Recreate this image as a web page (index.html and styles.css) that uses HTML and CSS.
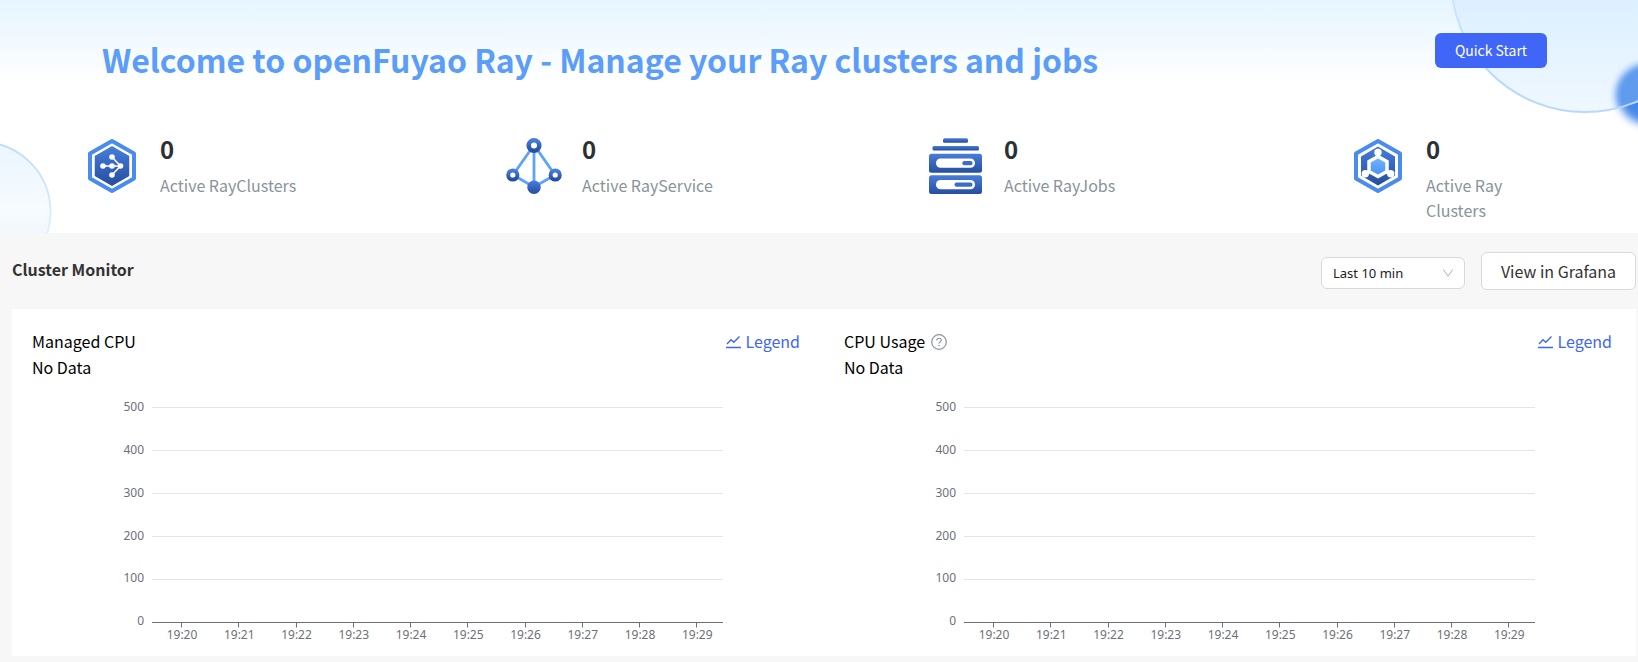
FILE: index.html
```html
<!DOCTYPE html>
<html lang="en">
<head>
    <meta charset="utf-8">
    <meta name="viewport" content="width=device-width, initial-scale=1.0">
    <title>openFuyao Ray</title>
    <link rel="stylesheet" href="styles.css">
</head>
<body>
    <header class="banner">
        <svg class="banner-bg" width="1638" height="233" viewBox="0 0 1638 233">
            <defs>
                <linearGradient id="bubbleLeft" x1="0" y1="0" x2="0" y2="1">
                    <stop offset="0" stop-color="#ebf6ff"/>
                    <stop offset="0.5" stop-color="#f6fbff"/>
                    <stop offset="0.68" stop-color="#f0f6fb"/>
                </linearGradient>
                <linearGradient id="bubbleLine" x1="0" y1="0" x2="0" y2="1">
                    <stop offset="0" stop-color="#b9dcff"/>
                    <stop offset="0.6" stop-color="#dceeff"/>
                </linearGradient>
                <linearGradient id="bubbleRight" x1="0" y1="0" x2="0" y2="1">
                    <stop offset="0.5" stop-color="#d9eeff"/>
                    <stop offset="1" stop-color="#eff8ff"/>
                </linearGradient>
                <linearGradient id="rightLine" x1="0" y1="0" x2="0" y2="1">
                    <stop offset="0.55" stop-color="#cfe6ff"/>
                    <stop offset="0.9" stop-color="#b5d9ff"/>
                </linearGradient>
                <clipPath id="insideRight"><circle cx="1585" cy="-22" r="134"/></clipPath>
            </defs>
            <circle cx="-19" cy="211.500" r="69.500" fill="url(#bubbleLeft)" stroke="url(#bubbleLine)" stroke-width="1.8"/>
            <circle cx="1585" cy="-22" r="134" fill="url(#bubbleRight)"/>
            <circle class="blob" cx="1647" cy="95" r="29" fill="#4488ea"/>
            <g clip-path="url(#insideRight)">
                <circle class="blob" cx="1647" cy="95" r="29" fill="#619bee"/>
            </g>
            <circle cx="1585" cy="-22" r="134" fill="none" stroke="url(#rightLine)" stroke-width="2"/>
        </svg>
        <div class="banner-top">
            <h1>Welcome to openFuyao Ray - Manage your Ray clusters and jobs</h1>
            <button class="quick-start">Quick Start</button>
        </div>
        <div class="stats">
            <div class="stat">
                <svg class="stat-icon" viewBox="0 0 60 60">
                    <defs>
                        <linearGradient id="deep" x1="0" y1="0" x2="0" y2="1">
                            <stop offset="0" stop-color="#477ddb"/>
                            <stop offset="1" stop-color="#264e9f"/>
                        </linearGradient>
                        <linearGradient id="sky" x1="0" y1="0" x2="0" y2="1">
                            <stop offset="0" stop-color="#70b9ff"/>
                            <stop offset="1" stop-color="#4a8df5"/>
                        </linearGradient>
                    </defs>
                    <path d="M30 5 L52 17.500 V42.500 L30 55 L8 42.500 V17.500 Z" fill="#fff" stroke="#4a8ced" stroke-width="4" stroke-linejoin="round"/>
                    <path d="M30 11 L46.500 20.500 V39.500 L30 49 L13.500 39.500 V20.500 Z" fill="url(#deep)" stroke="url(#deep)" stroke-width="1.500" stroke-linejoin="round"/>
                    <path d="M21 30 H38 M30 21 L38.500 30 L30 39" fill="none" stroke="#fff" stroke-width="1.500"/>
                    <g fill="#fff">
                        <circle cx="21" cy="30" r="2.800"/>
                        <circle cx="30" cy="30" r="2.800"/>
                        <circle cx="38.500" cy="30" r="2.800"/>
                        <circle cx="30" cy="21" r="2.800"/>
                        <circle cx="30" cy="39" r="2.800"/>
                    </g>
                </svg>
                <div class="stat-text">
                    <strong>0</strong>
                    <span>Active RayClusters</span>
                </div>
            </div>
            <div class="stat">
                <svg class="stat-icon" viewBox="0 0 60 60">
                    <path d="M30 9 L9 39 L30 51 L51 39 Z" fill="none" stroke="#5ba3fb" stroke-width="2.800"/>
                    <rect x="28.600" y="9" width="2.800" height="42" fill="#5ba3fb"/>
                    <circle cx="30" cy="9.500" r="5.300" fill="#fff" stroke="url(#deep)" stroke-width="4.600"/>
                    <circle cx="8.800" cy="39" r="4.600" fill="#fff" stroke="url(#deep)" stroke-width="4"/>
                    <circle cx="51.200" cy="39" r="4.600" fill="#fff" stroke="url(#deep)" stroke-width="4"/>
                    <circle cx="30" cy="51.300" r="6.700" fill="url(#deep)"/>
                </svg>
                <div class="stat-text">
                    <strong>0</strong>
                    <span>Active RayService</span>
                </div>
            </div>
            <div class="stat">
                <svg class="stat-icon" viewBox="0 0 60 60">
                    <g fill="url(#deep)">
                        <rect x="17" y="2.300" width="25" height="4.400" rx="1.500"/>
                        <rect x="6.500" y="10" width="46.500" height="4.400" rx="1.500"/>
                        <rect x="3" y="17.700" width="53" height="19" rx="2.500"/>
                        <rect x="3" y="39.300" width="53" height="18.700" rx="2.500"/>
                    </g>
                    <rect x="10" y="22.500" width="39" height="9.300" rx="4.600" fill="#fff"/>
                    <rect x="10" y="44" width="39" height="9.300" rx="4.600" fill="#fff"/>
                    <rect x="36.300" y="25" width="10.200" height="4.200" rx="2" fill="#3b6dc8"/>
                    <rect x="28.500" y="46.500" width="18" height="4.200" rx="2" fill="#3b6dc8"/>
                </svg>
                <div class="stat-text">
                    <strong>0</strong>
                    <span>Active RayJobs</span>
                </div>
            </div>
            <div class="stat">
                <svg class="stat-icon" viewBox="0 0 60 60">
                    <path d="M30 5 L52 17.500 V42.500 L30 55 L8 42.500 V17.500 Z" fill="#fff" stroke="#4a8ced" stroke-width="4" stroke-linejoin="round"/>
                    <path d="M30 10.500 L47 20.500 V39.500 L30 49.500 L13 39.500 V20.500 Z" fill="url(#deep)"/>
                    <path d="M30 20.500 L39 25.500 V35.500 L30 40.500 L21 35.500 V25.500 Z" fill="url(#sky)" stroke="#fff" stroke-width="3.500"/>
                    <path d="M30 17 V21 M17.500 38 L22 35.500 M42.500 38 L38 35.500" stroke="#fff" stroke-width="3.500"/>
                    <g fill="#fff">
                        <circle cx="30" cy="16.500" r="3.700"/>
                        <circle cx="17.300" cy="37.800" r="3.700"/>
                        <circle cx="42.700" cy="37.800" r="3.700"/>
                    </g>
                </svg>
                <div class="stat-text">
                    <strong>0</strong>
                    <span>Active Ray Clusters</span>
                </div>
            </div>
        </div>
    </header>

    <main class="monitor">
        <div class="toolbar">
            <h2>Cluster Monitor</h2>
            <div class="range">
                <span>Last 10 min</span>
                <svg width="12" height="12" viewBox="0 0 12 12"><path d="M1.300 2.500 L6 9 L10.700 2.500" fill="none" stroke="#bfbfbf" stroke-width="1.100"/></svg>
            </div>
            <button class="grafana">View in Grafana</button>
        </div>
        <div class="panel">
            <section class="card">
                <div class="card-head">
                    <h3>Managed CPU</h3>
                    <a class="legend">
                        <svg width="15" height="14" viewBox="0 0 15 14"><path d="M0 12.500 H15 M1 9 L5 4.800 L7.800 7.300 L13.500 1.500" fill="none" stroke="currentColor" stroke-width="1.400"/></svg>
                        Legend
                    </a>
                </div>
                <p>No Data</p>
                <svg class="chart" viewBox="0 0 812 276"></svg>
            </section>
            <section class="card">
                <div class="card-head">
                    <h3>CPU Usage</h3>
                    <svg class="help" width="16" height="16" viewBox="0 0 16 16">
                        <circle cx="8" cy="8" r="7.300" fill="none" stroke="#8d959c" stroke-width="1.200"/>
                        <path d="M5.800 6.400 C5.800 3.500 10.300 3.600 10.300 6.300 C10.300 7.900 8 7.900 8 9.500" fill="none" stroke="#8d959c" stroke-width="1.200"/>
                        <circle cx="8" cy="11.500" r="0.800" fill="#8d959c"/>
                    </svg>
                    <a class="legend">
                        <svg width="15" height="14" viewBox="0 0 15 14"><path d="M0 12.500 H15 M1 9 L5 4.800 L7.800 7.300 L13.500 1.500" fill="none" stroke="currentColor" stroke-width="1.400"/></svg>
                        Legend
                    </a>
                </div>
                <p>No Data</p>
                <svg class="chart" viewBox="0 0 812 276"></svg>
            </section>
        </div>
    </main>

    <script src="charts.js"></script>
</body>
</html>
```
FILE: charts.js
```js
const left = 140;
const right = 711;
const top0 = 27.5;
const rowHeight = 43;
const values = [500, 400, 300, 200, 100, 0];
const times = ['19:20', '19:21', '19:22', '19:23', '19:24', '19:25', '19:26', '19:27', '19:28', '19:29'];
const step = 57.25;

function drawAxes(svg) {
    let out = '';
    values.forEach((value, i) => {
        const y = top0 + i * rowHeight;
        const cls = value === 0 ? 'axis' : 'grid';
        const labelY = value > 100 ? y + 3.5 : y + 2.5;
        out += `<line class="${cls}" x1="${left}" x2="${right}" y1="${y}" y2="${y}"/>`;
        out += `<text x="${left - 8}" y="${labelY}" text-anchor="end">${value}</text>`;
    });
    const base = top0 + 5 * rowHeight;
    times.forEach((time, i) => {
        const x = left + 29.5 + step * i;
        const tick = Math.floor(x) + 0.5;
        out += `<line class="axis" x1="${tick}" x2="${tick}" y1="${base}" y2="${base + 5}"/>`;
        out += `<text x="${x + 0.5}" y="${base + 16.5}" text-anchor="middle">${time}</text>`;
    });
    svg.innerHTML = out;
}

document.querySelectorAll('.chart').forEach(drawAxes);
```
FILE: styles.css
```css
* {
    box-sizing: border-box;
    margin: 0;
    padding: 0;
}
body {
    font-family: "Noto Sans CJK SC", sans-serif;
    font-size: 16px;
    line-height: 25px;
    background: #f7f7f7;
    color: #000;
    height: 662px;
    overflow: hidden;
}
button {
    font-family: inherit;
    cursor: pointer;
}
.banner {
    position: relative;
    height: 233px;
    overflow: hidden;
    background: linear-gradient(#e6f5ff 0, #fff 84px);
}
.banner-bg {
    position: absolute;
    top: 0;
    left: 0;
}
.blob {
    filter: blur(4px);
}
.banner-top {
    position: relative;
    display: flex;
    justify-content: space-between;
    align-items: flex-start;
    padding: 33px 91px 0 102px;
    height: 136px;
}
h1 {
    font-size: 32px;
    font-weight: 600;
    line-height: 52px;
    letter-spacing: -0.03px;
    color: #5b9df8;
    white-space: nowrap;
}
.quick-start {
    width: 112px;
    height: 35px;
    padding-bottom: 2px;
    border: none;
    border-radius: 6px;
    background: #4066f7;
    color: #fff;
    font-size: 14px;
}
.stats {
    position: relative;
    display: grid;
    grid-template-columns: repeat(4, 422px);
    padding-left: 82px;
}
.stat {
    display: flex;
    gap: 18px;
}
.stat-icon {
    width: 60px;
    height: 60px;
}
.stat-text {
    width: 150px;
    color: #89939b;
}
.stat:last-child .stat-text {
    width: 100px;
}
.stat-text strong {
    display: block;
    height: 37px;
    line-height: 26px;
    font-size: 24px;
    color: #2c2f33;
}
.monitor {
    padding: 19px 2px 0 12px;
}
.toolbar {
    display: flex;
    height: 57px;
}
.toolbar h2 {
    flex: 1;
    margin-top: 5px;
    font-size: 16px;
    color: #333;
}
.range {
    display: flex;
    justify-content: space-between;
    align-items: center;
    width: 144px;
    height: 32px;
    margin: 5px 16px 0 0;
    padding: 0 10px 0 11px;
    border: 1px solid #d9d9d9;
    border-radius: 6px;
    background: #fff;
    font-family: "Noto Sans", sans-serif;
    font-size: 13px;
    color: #222;
}
.grafana {
    width: 155px;
    height: 38px;
    border: 1px solid #d9d9d9;
    border-radius: 6px;
    background: #fff;
    color: #333;
    font-size: 16px;
}
.panel {
    display: grid;
    grid-template-columns: 812px 812px;
    height: 347px;
    background: #fff;
}
.card {
    padding-top: 20px;
}
.card-head {
    display: flex;
    align-items: flex-start;
    height: 26px;
    padding: 0 24px 0 20px;
}
.card h3 {
    font-size: 16px;
    font-weight: 400;
}
.card p {
    height: 25px;
    padding-left: 20px;
}
.help {
    margin: 5px 0 0 6px;
}
.legend {
    display: flex;
    align-items: center;
    gap: 5px;
    margin-left: auto;
    color: #4066f7;
}
.chart {
    display: block;
    width: 812px;
    height: 276px;
}
.chart text {
    font-family: "Noto Sans", sans-serif;
    font-size: 12px;
    fill: #6e7079;
}
.grid {
    stroke: #e0e6f1;
}
.axis {
    stroke: #6e7079;
}
```
